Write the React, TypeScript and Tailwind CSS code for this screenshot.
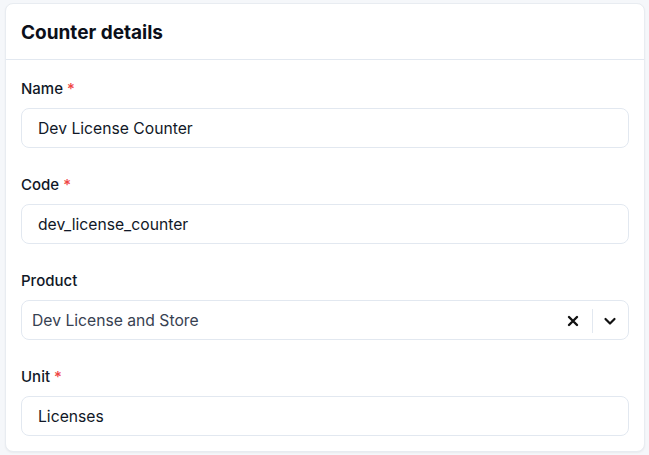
import React from "react";

function Label({ text, required }: { text: string; required?: boolean }) {
  return (
    <div className="text-[15px] leading-5 font-medium text-[#111827] mb-[9px] h-5">
      {text}
      {required && <span className="text-[#ef4444] ml-1">*</span>}
    </div>
  );
}

function Input({ value }: { value: string }) {
  return (
    <div className="h-10 rounded-lg border border-[#e2e8f0] bg-white flex items-center px-4 pt-[2px] text-[15.7px] text-[#111827]">
      {value}
    </div>
  );
}

export default function App() {
  return (
    <div className="w-[649px] h-[455px] bg-[#f5f7fa] pt-[3px] pl-[5px] pr-[4px]" style={{ fontFamily: "Inter, 'Noto Sans', sans-serif" }}>
      <div className="w-[640px] h-[449px] bg-white rounded-lg border border-[#e8ecf1] shadow-[0_1px_2px_rgba(0,0,0,0.05)] overflow-hidden">
        <div className="h-[56px] border-b border-[#e2e8f0] flex items-center px-[15px] pt-[3px]">
          <h2 className="text-[19px] font-bold text-[#0b0f1a]">Counter details</h2>
        </div>
        <div className="px-[15px] pt-[19px] flex flex-col gap-[27px]">
          <div>
            <Label text="Name" required />
            <Input value="Dev License Counter" />
          </div>
          <div>
            <Label text="Code" required />
            <Input value="dev_license_counter" />
          </div>
          <div>
            <Label text="Product" />
            <div className="h-10 rounded-lg border border-[#e2e8f0] bg-white flex items-center pl-[10px] pr-[11px] pt-[2px] text-[15.7px] text-[#374151]">
              <span className="flex-1">Dev License and Store</span>
              <svg width="12" height="12" viewBox="0 0 12 12" className="mr-[13px]">
                <path d="M2 2L10 10M10 2L2 10" stroke="#111" strokeWidth="2.4" strokeLinecap="round" />
              </svg>
              <div className="w-px h-6 bg-[#e2e8f0]" />
              <svg width="14" height="14" viewBox="0 0 14 14" className="ml-[10px]">
                <path d="M2.5 5L7 9.5L11.5 5" stroke="#111" strokeWidth="2.2" fill="none" strokeLinecap="round" strokeLinejoin="round" />
              </svg>
            </div>
          </div>
          <div>
            <Label text="Unit" required />
            <Input value="Licenses" />
          </div>
        </div>
      </div>
    </div>
  );
}
